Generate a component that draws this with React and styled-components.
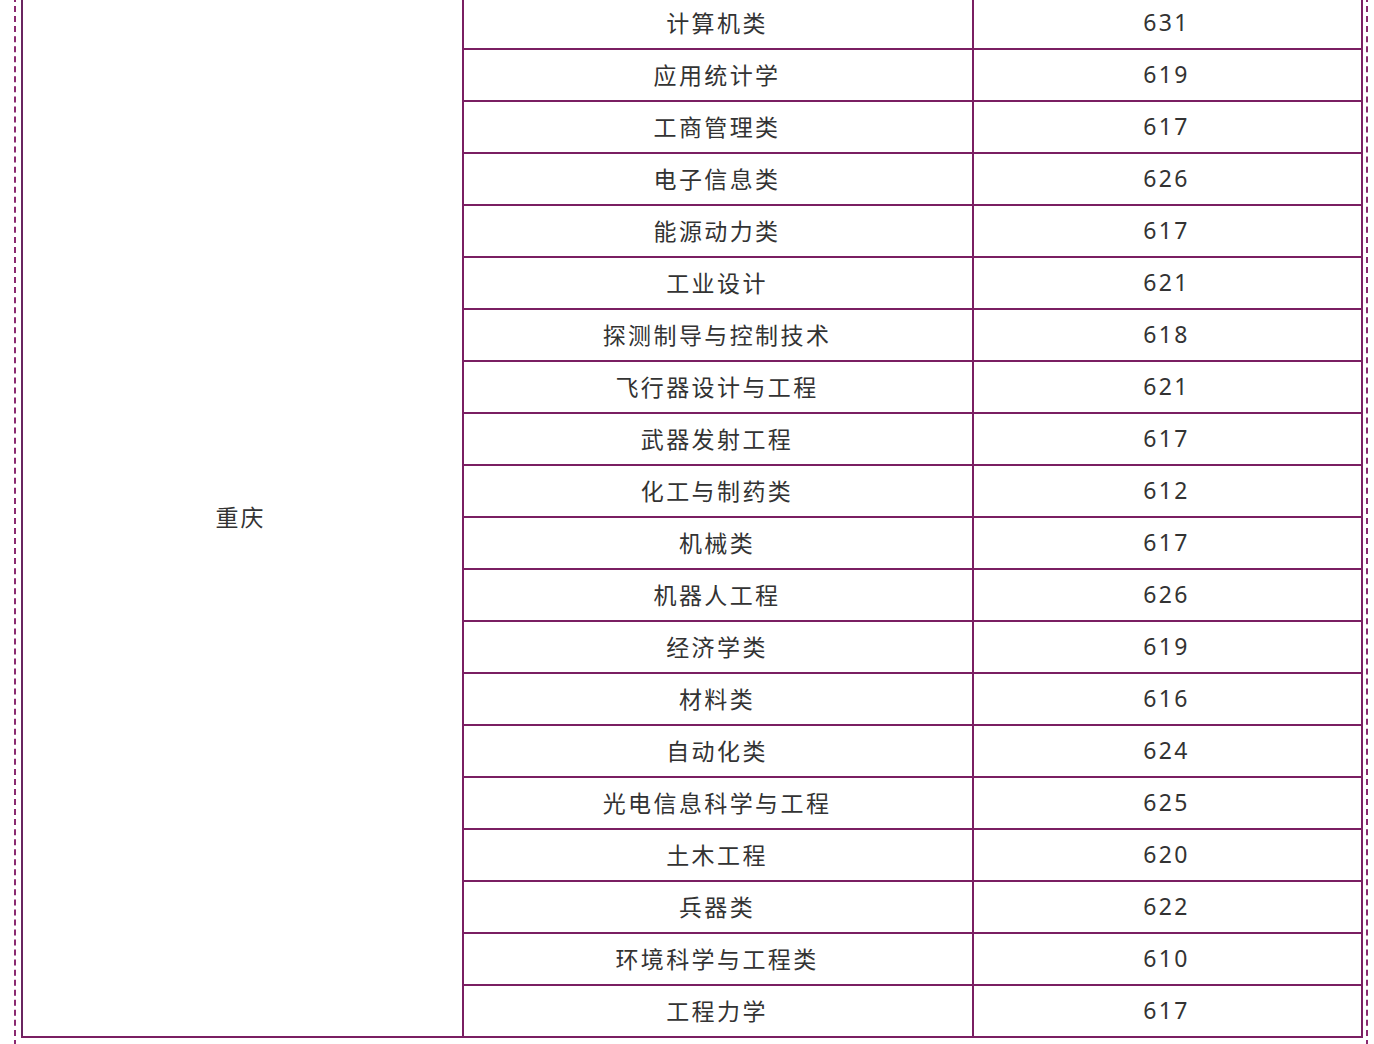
import React from "react";
import styled, { createGlobalStyle } from "styled-components";

const Global = createGlobalStyle`
  html, body { margin: 0; padding: 0; background: #ffffff; }
  body { font-family: "Noto Sans CJK SC", "Noto Sans", sans-serif; overflow: hidden; }
`;

const Frame = styled.div`
  margin: -4px 0 0 14px;
  width: 1354px;
  box-sizing: border-box;
  border-left: 2px dashed #8a2a70;
  border-right: 2px dashed #8a2a70;
  padding: 0 5px 20px 5px;
  min-height: 1070px;
`;

const Table = styled.table`
  border-collapse: collapse;
  width: 1340px;
  table-layout: fixed;
`;

const Col = styled.col`
  width: ${(p) => p.$w}px;
`;

const Cell = styled.td`
  border: 2px solid #7a1f62;
  height: 52px;
  box-sizing: border-box;
  padding: 0 2px 2px 0;
  text-align: center;
  vertical-align: middle;
  color: #333333;
  font-size: 23px;
  letter-spacing: 2.4px;
  line-height: 1;
  font-family: ${(p) => (p.$num ? '"Noto Sans", sans-serif' : '"Noto Sans CJK SC", sans-serif')};
`;

const RegionCell = styled(Cell)`
  border-left-color: #6a2560;
  letter-spacing: 2px;
  padding-right: 4px;
`;

const rows = [
  ["计算机类", "631"],
  ["应用统计学", "619"],
  ["工商管理类", "617"],
  ["电子信息类", "626"],
  ["能源动力类", "617"],
  ["工业设计", "621"],
  ["探测制导与控制技术", "618"],
  ["飞行器设计与工程", "621"],
  ["武器发射工程", "617"],
  ["化工与制药类", "612"],
  ["机械类", "617"],
  ["机器人工程", "626"],
  ["经济学类", "619"],
  ["材料类", "616"],
  ["自动化类", "624"],
  ["光电信息科学与工程", "625"],
  ["土木工程", "620"],
  ["兵器类", "622"],
  ["环境科学与工程类", "610"],
  ["工程力学", "617"],
];

export default function App() {
  return (
    <>
      <Global />
      <Frame>
        <Table>
          <colgroup>
            <Col $w={441} />
            <Col $w={510} />
            <Col $w={389} />
          </colgroup>
          <tbody>
            {rows.map(([major, score], i) => (
              <tr key={major}>
                {i === 0 && <RegionCell rowSpan={rows.length}>重庆</RegionCell>}
                <Cell>{major}</Cell>
                <Cell $num>{score}</Cell>
              </tr>
            ))}
          </tbody>
        </Table>
      </Frame>
    </>
  );
}
